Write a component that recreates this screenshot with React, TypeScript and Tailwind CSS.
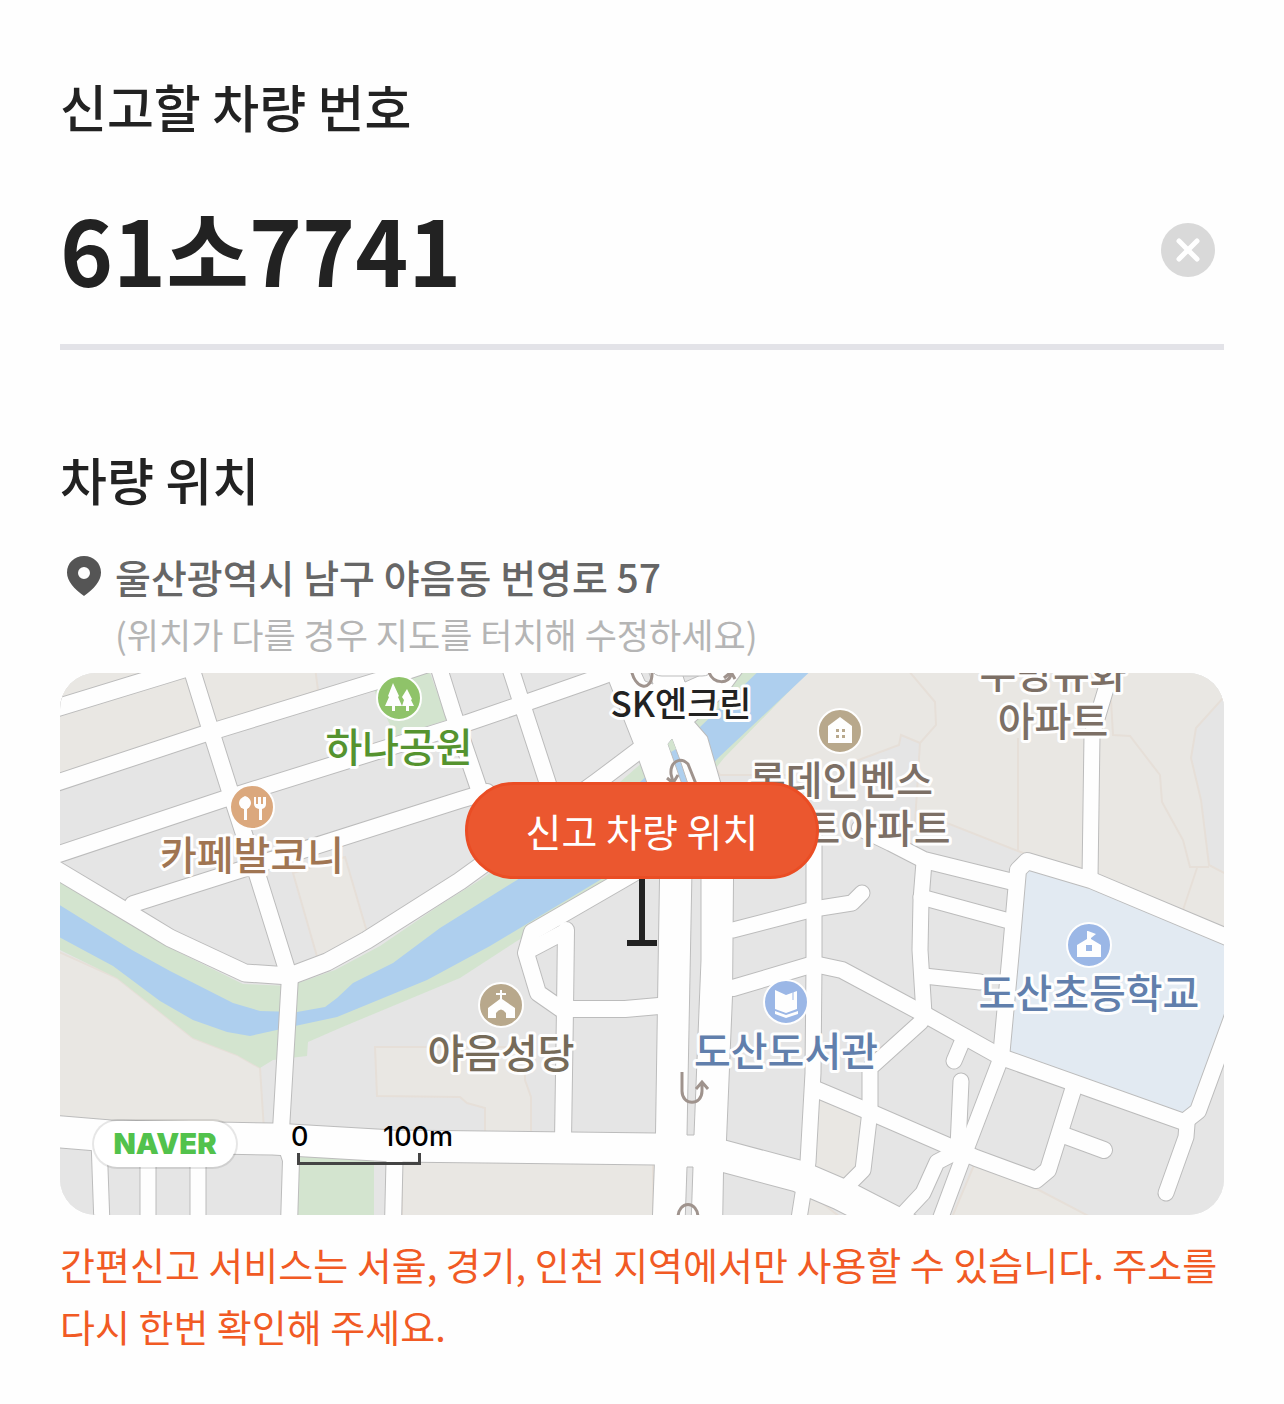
import { useState } from "react";

type Road = { d: string; w: number };

const ROADS: Road[] = [
  { d: "M50 710L164 675L200 664", w: 17 },
  { d: "M50 785L204 734L377 681L440 660", w: 16 },
  { d: "M50 857L224 799L467 723L531 701L597 678L640 662", w: 16 },
  { d: "M133 904L240 870L460 800L487 792", w: 16 },
  { d: "M438 665L453 713L481 795", w: 16 },
  { d: "M190 664L209 725L229 788L258 877L288 973", w: 16 },
  { d: "M509 664L520 698L550 790", w: 16 },
  { d: "M50 866L137 918L170 938L245 973L290 976L327 962L367 940L460 881L597 782L650 742", w: 17 },
  { d: "M290 976L281 1130L291 1160L289 1225", w: 16 },
  { d: "M99 1140L102 1225", w: 15 },
  { d: "M148 1140L148 1225", w: 15 },
  { d: "M198 1140L198 1225", w: 15 },
  { d: "M395 1140L393 1225", w: 16 },
  { d: "M670 852L622 880L532 932L526 953L538 993L561 1009", w: 16 },
  { d: "M528 951L566 931", w: 15 },
  { d: "M566 930L565 1009L563 1140", w: 16 },
  { d: "M565 1009L625 1009L670 1005", w: 16 },
  { d: "M733 930L814 909L852 903L862 893", w: 15 },
  { d: "M733 988L814 964L842 970L924 1014L1001 1057L1184 1122", w: 16 },
  { d: "M814 830L814 965L813 1073L808 1162L798 1225", w: 15 },
  { d: "M860 828L891 843L924 860L1009 881", w: 16 },
  { d: "M924 862L921 900L920 950L924 1014", w: 15 },
  { d: "M921 897L1009 921", w: 15 },
  { d: "M924 976L980 982", w: 15 },
  { d: "M1001 1058L1011 950L1018 870L1027 861L1091 880L1234 940", w: 16 },
  { d: "M1114 664L1105 692L1092 735L1090 878", w: 15 },
  { d: "M962 1042L954 1061", w: 15 },
  { d: "M961 1081L958 1147", w: 15 },
  { d: "M1001 1058L967 1147L938 1225", w: 15 },
  { d: "M921 1022L870 1068L870 1111L863 1170L849 1184", w: 15 },
  { d: "M813 1088L870 1112L976 1158L1036 1180L1048 1170L1073 1090", w: 16 },
  { d: "M1066 1136L1104 1150", w: 16 },
  { d: "M962 1149L937 1162L923 1193L893 1225", w: 15 },
  { d: "M1184 1122L1198 1111L1235 1010", w: 16 },
  { d: "M1187 1124L1186 1137L1166 1193", w: 15 },
  { d: "M50 1131L110 1136L273 1139L393 1146L656 1149L723 1156L798 1176L840 1194L910 1230", w: 31 },
];

const AVENUE =
  "M603 665L610 683L634 744L640 762L650 790L660 830L660 880L659 940L656 1134L653 1215V1230H722L723 1172L726 1140L732 996L733 880V810L720 782L707 737L694 722L726 694L745 668V660H603Z";

function MapDrawing() {
  return (
    <svg
      className="absolute inset-0 h-full w-full"
      viewBox="60 673 1164 542"
      preserveAspectRatio="xMidYMid slice"
      aria-hidden="true"
    >
      <rect x="60" y="673" width="1164" height="542" fill="#e5e5e5" />
      <g fill="#e9e7e3" stroke="#e6dfd8" strokeWidth="2">
        <path d="M50 660H314L318 690L204 734L50 785Z" />
        <path d="M293 873L345 857L367 932L318 960Z" />
        <path d="M50 948L117 978L193 1038L237 1055L260 1068L264 1130H50Z" />
        <path d="M375 1047H525V1080L531 1097V1135H485V1108L467 1103L460 1097L377 1096Z" />
        <path d="M720 775L700 740L790 660H1240V940L1091 880L1018 851L947 823H915L920 743L901 735L899 745L864 758L820 775Z" />
        <path d="M402 1155H653V1230H402Z" />
        <path d="M815 1090L864 1112L856 1180H812Z" />
        <path d="M806 1190L850 1225H800Z" />
        <path d="M974 1165L1037 1189L1100 1222H950Z" />
      </g>
      <path d="M1234 686L1196 728L1191 758L1201 800L1209 865L1234 878Z" fill="#e5e5e5" stroke="#e6dfd8" strokeWidth="2" />
      <g fill="none" stroke="#e6dfd8" strokeWidth="2">
        <path d="M908 670L935 702L936 725L920 743" />
        <path d="M1018 738V850" />
        <path d="M1111 700L1113 735L1130 736L1160 775L1162 802L1183 840L1190 867H1209" />
        <path d="M1197 868L1183 910" />
      </g>
      <path
        d="M60 880L170 948L243 984L290 986L335 970L380 946L440 905L480 880L620 782L700 712L748 665H815L724 758L650 850L613 882L517 941L460 978L340 1028L308 1042L307 1056L273 1060L260 1068L237 1055L193 1038L117 978L50 945Z"
        fill="#d3e4cf"
      />
      <path d="M374 690L376 673H430L447 720L395 736Z" fill="#d3e4cf" />
      <path d="M299 1150H374V1225H297Z" fill="#d3e4cf" />
      <path
        d="M50 899L132 950L170 971L233 1003L260 1011L297 1012L325 1007L337 998L353 983L393 963L440 928L517 880L640 782L700 727L765 665H817L717 759L660 835L600 880L490 946L427 980L337 1017L295 1026L250 1036L227 1032L193 1020L160 1001L113 966L50 932Z"
        fill="#aecfee"
      />
      <path d="M1020 862L1091 880L1234 940V1010L1198 1111L1184 1122L1001 1058Z" fill="#e2eaf2" />

      <g fill="none" stroke="#bcbcbc" strokeLinecap="round" strokeLinejoin="round">
        {ROADS.map((r) => (
          <path key={r.d} d={r.d} strokeWidth={r.w + 2} />
        ))}
        <path d={AVENUE} strokeWidth="2" />
      </g>
      <g fill="none" stroke="#fefefe" strokeLinecap="round" strokeLinejoin="round">
        {ROADS.map((r) => (
          <path key={r.d} d={r.d} strokeWidth={r.w} />
        ))}
      </g>
      <path d={AVENUE} fill="#fefefe" />
      <g fill="#e5e5e5" stroke="#bcbcbc">
        <path d="M692 870L687 1135H694L701 960V870Z" />
        <path d="M687 1167H693L691 1225H685Z" />
        <path d="M640 670H648L653 684L645 681Z" />
        <path d="M681 670H712L685 682Z" />
        <path d="M652 670Q654 676 662 676H702Q710 676 712 670Z" fill="#fefefe" />
      </g>
      <path d="M668 744L672 739L680 760L690 790H684Z" fill="#aecfee" stroke="#bcbcbc" />
      <path d="M668 744L672 739L676 749L671 752Z" fill="#d3e4cf" />

      <g fill="none" stroke="#9f938d" strokeWidth="3">
        <path d="M631 668C634 690 652 692 652 674V668" />
        <path d="M709 672C713 685 730 684 731 674M724 678L731 672L735 679" />
        <path d="M696 784L688 764C680 756 670 762 671 774L673 782M667 778L673 783L678 775" />
        <path d="M682 1072V1091C682 1106 702 1106 702 1091V1083M696 1089L702 1082L708 1089" />
        <path d="M678 1218C678 1200 698 1200 698 1218" />
      </g>

      <g stroke="#fefefe" strokeWidth="2">
        <circle cx="399" cy="698" r="22" fill="#8fc369" />
        <circle cx="252" cy="807" r="22" fill="#dba87d" />
        <circle cx="840" cy="731" r="22" fill="#b8a88c" />
        <circle cx="501" cy="1005" r="22" fill="#b8a88c" />
        <circle cx="786" cy="1002" r="22" fill="#9bb7e6" />
        <circle cx="1089" cy="945" r="22" fill="#9bb7e6" />
      </g>
      <g fill="#fefefe">
        <path d="M393 683L399 696L398 697L402 706H395V711H392V706H385L389 697L388 696Z" />
        <path d="M407 689L412 699L411 700L414 706H409V711H406V706H402L404 700L402 697Z" />
        <path d="M245 796a6 7 0 0 1 2 13V820h-3V809a6 7 0 0 1 1-13Z" />
        <circle cx="245" cy="803" r="6" />
        <path d="M254 797h2v7h2v-7h3v7h2v-7h3v7q0 4-4 5V820h-3V809q-5-1-5-5Z" />
        <path d="M840 717L852 726V743H828V726Z" />
        <path d="M500 990h2v3h4v2h-4v4l13 9v10h-9v-5q-5-7-10 0v5h-8v-10l12-9v-4h-4v-2h4Z" />
        <path d="M775 990L786 995L797 991V1009L786 1013L775 1009ZM775 1011L786 1015L798 1011V1014L786 1018L775 1014Z" />
        <path d="M1088 931L1096 934L1091 938V939L1101 945V957H1077V945L1087 939V931Z" />
      </g>
      <g fill="#b8a88c">
        <path d="M836 729h3v3h-3zM842 729h3v3h-3zM836 735h3v3h-3zM842 735h3v3h-3z" />
      </g>
      <path d="M1086 945h6v6h-6z" fill="#9bb7e6" />
      <path d="M793 990V1000" stroke="#9bb7e6" strokeWidth="1" />

      <g
        className="font-['Noto_Sans_CJK_KR',sans-serif] text-[40px] font-medium"
        textAnchor="middle"
        stroke="#fefefe"
        strokeWidth="6"
        strokeLinejoin="round"
        paintOrder="stroke"
      >
        <text x="399" y="762" fill="#55932f">하나공원</text>
        <text x="252" y="870" fill="#a07552">카페발코니</text>
        <text x="841" y="795" fill="#7c6f65">롯데인벤스</text>
        <text x="877" y="843" fill="#7c6f65">트아파트</text>
        <text x="1053" y="688" fill="#7c6f65">우방유화</text>
        <text x="1053" y="736" fill="#7c6f65">아파트</text>
        <text x="501" y="1068" fill="#766b59">야음성당</text>
        <text x="786" y="1066" fill="#617fac">도산도서관</text>
        <text x="1089" y="1008" fill="#617fac">도산초등학교</text>
        <text x="681" y="717" fill="#222222" className="text-[35px]">SK엔크린</text>
      </g>
    </svg>
  );
}

export default function App() {
  const [plate, setPlate] = useState("61소7741");
  return (
    <main className="min-h-screen bg-[#fefefe] px-[60px] pt-[70px] pb-12 font-['Noto_Sans_CJK_KR',sans-serif] text-[#222222]">
      <section>
        <label htmlFor="plate" className="block text-[51px] leading-[72px] font-medium">
          신고할 차량 번호
        </label>
        <div className="mt-[38px] flex h-[170px] items-start justify-between border-b-6 border-[#e3e3e8]">
          <input
            id="plate"
            value={plate}
            onChange={(e) => setPlate(e.target.value)}
            className="h-[136px] min-w-0 flex-1 bg-transparent text-[90px] font-bold outline-none"
          />
          <button
            type="button"
            aria-label="지우기"
            onClick={() => setPlate("")}
            className="mt-[43px] mr-[9px] flex size-[54px] shrink-0 items-center justify-center rounded-full bg-[#d9d9d9]"
          >
            <svg className="size-6" viewBox="0 0 24 24" fill="none" stroke="#ffffff" strokeWidth="5" strokeLinecap="round">
              <path d="M3 3L21 21M21 3L3 21" />
            </svg>
          </button>
        </div>
      </section>

      <section className="mt-[93px]">
        <h2 className="text-[51px] leading-[72px] font-medium">차량 위치</h2>
        <div className="mt-[31px] flex items-start">
          <svg className="mt-[9px] ml-[6px] h-[42px] w-9 shrink-0" viewBox="0 0 36 42" aria-hidden="true">
            <path
              d="M18 1C8.500 1 1 8 1 17.500C1 26 8 34 18 41C28 34 35 26 35 17.500C35 8 27.500 1 18 1ZM18 12a6 6 0 1 1 0 12a6 6 0 0 1 0-12Z"
              fill="#555555"
              fillRule="evenodd"
            />
          </svg>
          <div className="ml-[13px]">
            <p className="text-[39px] leading-[60px] font-medium text-[#666666]">울산광역시 남구 야음동 번영로 57</p>
            <p className="text-[35px] leading-[55px] text-[#b5b5b5]">(위치가 다를 경우 지도를 터치해 수정하세요)</p>
          </div>
        </div>

        <div className="relative mt-3 h-[542px] overflow-hidden rounded-[36px] bg-[#e5e5e5]">
          <MapDrawing />
          <div className="absolute top-[109px] left-1/2 flex -translate-x-1/2 flex-col items-center">
            <button
              type="button"
              className="h-[97px] w-[354px] rounded-full border-3 border-[#ea4d24] bg-[#eb572f] text-[39px] whitespace-nowrap text-white"
            >
              신고 차량 위치
            </button>
            <span className="h-[61px] w-[6px] bg-[#222222]" />
            <span className="h-[6px] w-[30px] bg-[#222222]" />
          </div>
          <div className="absolute bottom-[48px] left-[34px] flex h-[46px] w-[142px] items-center justify-center rounded-full bg-white font-['Inter',sans-serif] text-[29px] font-black text-[#52c24c] shadow-[0_0_0_2px_#00000018]">
            NAVER
          </div>
          <div className="absolute bottom-[50px] left-[231px] font-['Inter',sans-serif] text-[27px] leading-8 font-medium text-black">
            <div className="flex w-[162px] justify-between">
              <span>0</span>
              <span>100m</span>
            </div>
            <div className="ml-[6px] h-[12px] w-[124px] border-3 border-t-0 border-[#444444]" />
          </div>
        </div>

        <p role="alert" className="mt-[18px] text-[38px] leading-[62px] break-keep text-[#f15a24]">
          간편신고 서비스는 서울, 경기, 인천 지역에서만 사용할 수 있습니다. 주소를 다시 한번 확인해 주세요.
        </p>
      </section>
    </main>
  );
}
